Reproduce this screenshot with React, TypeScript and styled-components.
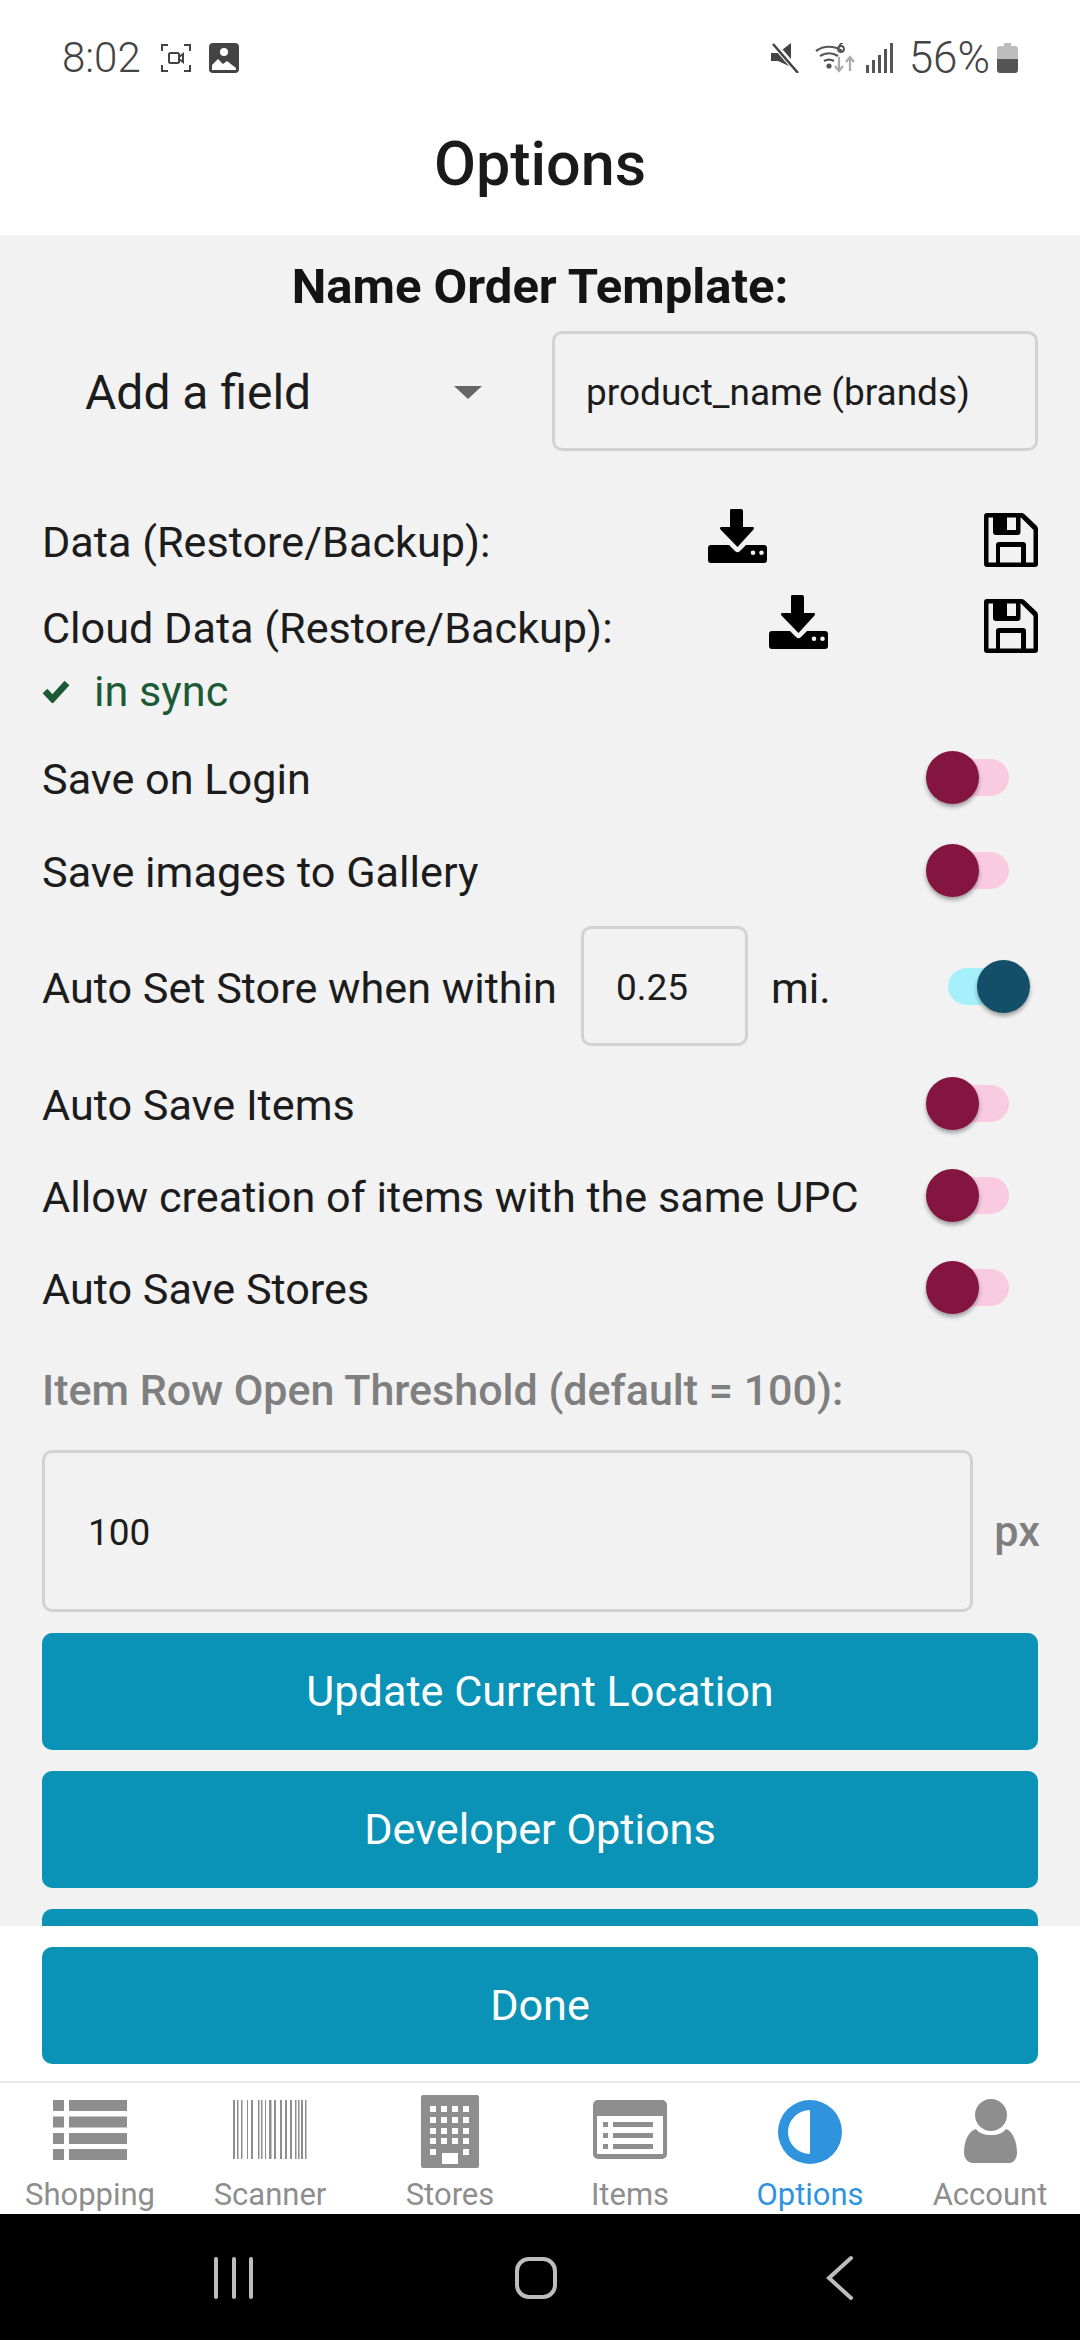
import React from "react";
import styled, { createGlobalStyle } from "styled-components";

const Global = createGlobalStyle`
  html, body { margin: 0; padding: 0; background: #fff; }
  #root { width: 1080px; height: 2340px; }
  * { box-sizing: border-box; }
`;

const Page = styled.div`
  width: 1080px; height: 2340px; display: flex; flex-direction: column;
  font-family: Roboto, "Liberation Sans", sans-serif; color: #1c1c1c; background: #fff; overflow: hidden;
`;
const StatusBar = styled.div`
  height: 116px; flex: none; padding: 43px 62px 0 62px; display: flex; align-items: flex-start; justify-content: space-between; color: #444;
`;
const StatusGroup = styled.div`
  display: flex; align-items: center; height: 30px;
`;
const StatusText = styled.span<{ $gap?: number; $fs: number }>`
  font-size: ${p => p.$fs}px; line-height: 30px; font-weight: 300; margin-right: ${p => p.$gap ?? 0}px;
`;
const StatusIcon = styled.svg<{ $gap?: number }>`
  display: block; flex: none; margin-right: ${p => p.$gap ?? 0}px;
`;
const Header = styled.div`
  height: 119px; flex: none; display: flex; justify-content: center; align-items: flex-start;
  font-size: 61px; font-weight: 500; line-height: 66px; padding-top: 15px; color: #1a1a1a;
`;
const Content = styled.div`
  flex: 1; min-height: 0; overflow: hidden; background: #f2f2f2; padding: 28px 42px 0;
`;
const Title = styled.div`
  text-align: center; font-size: 49px; font-weight: 700; line-height: 48px; color: #141414;
`;
const TemplateRow = styled.div`
  display: flex; align-items: center; justify-content: space-between; margin-top: 20px; height: 120px;
`;
const Picker = styled.div`
  width: 440px; padding: 3px 0 0 43px; display: flex; align-items: center; justify-content: space-between; font-size: 48px;
`;
const Caret = styled.span`
  width: 0; height: 0; border-left: 14px solid transparent; border-right: 14px solid transparent; border-top: 13px solid #666;
`;
const Field = styled.div<{ $h: number; $px: number; $fs: number }>`
  height: ${p => p.$h}px; border: 3px solid #d2d2d2; border-radius: 10px; display: flex; align-items: center;
  padding: 3px ${p => p.$px}px 0; font-size: ${p => p.$fs}px; color: #1c1c1c;
`;
const TemplateField = styled(Field)`
  width: 486px; flex: none;
`;
const DistanceField = styled(Field)`
  width: 167px; flex: none; margin-left: 24px;
`;
const ThresholdField = styled(Field)`
  flex: 1;
`;
const Label = styled.span`
  padding-top: 5px;
`;
const DataRow = styled.div<{ $mt: number }>`
  display: flex; align-items: center; justify-content: space-between; margin-top: ${p => p.$mt}px; height: 56px; font-size: 43.200px;
`;
const Sync = styled.div`
  display: flex; align-items: center; gap: 24px; color: #1c5a36; font-size: 43.200px; height: 56px; margin-top: 9px;
`;
const ToggleRow = styled.div<{ $mt: number }>`
  display: flex; align-items: center; justify-content: space-between; margin-top: ${p => p.$mt}px; height: 60px; font-size: 43.200px; padding-right: 29px;
`;
const Track = styled.div<{ $on?: boolean }>`
  position: relative; width: 78px; height: 37px; border-radius: 19px; background: ${p => (p.$on ? "#a5f0fb" : "#f8cbe0")};
`;
const Knob = styled.div<{ $on?: boolean }>`
  position: absolute; top: -8px; ${p => (p.$on ? "right: -4px;" : "left: -5px;")} width: 53px; height: 53px; border-radius: 50%;
  background: ${p => (p.$on ? "#134f68" : "#831540")}; box-shadow: 0 3px 4px rgba(0,0,0,.35);
`;
const AutoRow = styled.div`
  display: flex; align-items: center; margin-top: 26px; height: 120px; font-size: 43.200px; padding-right: 12px;
`;
const Unit = styled.span`
  margin-left: 23px; flex: 1; padding-top: 5px;
`;
const Threshold = styled.div`
  margin-top: 50px; font-size: 43px; font-weight: 500; color: #7f7f7f; line-height: 46px;
`;
const ThresholdRow = styled.div`
  display: flex; align-items: center; margin-top: 37px;
`;
const Px = styled.span`
  margin: 0 -2px 0 21px; font-size: 43.200px; font-weight: 500; color: #7f7f7f;
`;
const Button = styled.div`
  height: 117px; flex: none; border-radius: 10px; background: #0a93b7; color: #fff; font-size: 43.200px;
  display: flex; align-items: center; justify-content: center;
`;
const Stack = styled.div`
  display: flex; flex-direction: column; gap: 21px; margin-top: 21px;
`;
const Footer = styled.div`
  height: 157px; flex: none; background: #fff; padding: 21px 42px 0; border-bottom: 2px solid #e8e8e8;
`;
const Tabs = styled.div`
  height: 131px; flex: none; display: grid; grid-template-columns: repeat(6, 180px); background: #fff; padding-top: 12px;
`;
const Tab = styled.div<{ $active?: boolean }>`
  display: flex; flex-direction: column; align-items: center; color: ${p => (p.$active ? "#2f94dd" : "#8e8e8e")};
  font-size: 31px; line-height: 36px;
`;
const TabIcon = styled.svg`
  display: block; width: 80px; height: 73px; fill: currentColor; margin-bottom: 9px;
`;
const NavBar = styled.div`
  height: 126px; flex: none; background: #000;
`;
const NavSvg = styled.svg`
  display: block; width: 1080px; height: 126px;
`;
const IconSvg = styled.svg`
  display: block; flex: none;
`;
const DownloadSvg = styled(IconSvg)`
  margin-bottom: 8px;
`;

const Download = () => (
  <DownloadSvg width="59" height="54" viewBox="0 0 59 54">
    <path fill="#000" d="M22 1a2 2 0 0 1 2-1h9a2 2 0 0 1 2 2v16h9.500c1.500 0 2 1.500 1 2.500L29.500 38 12.500 20.500c-1-1-.5-2.500 1-2.500H22z" />
    <path fill="#000" fillRule="evenodd" d="M3 36h18l6 6a3.500 3.500 0 0 0 5 0l6-6h18a3 3 0 0 1 3 3v12a3 3 0 0 1-3 3H3a3 3 0 0 1-3-3V39a3 3 0 0 1 3-3zm42 10a2.300 2.300 0 1 0 0-4.600 2.300 2.300 0 0 0 0 4.600zm8.500 0a2.300 2.300 0 1 0 0-4.600 2.300 2.300 0 0 0 0 4.600z" />
  </DownloadSvg>
);
const Save = () => (
  <IconSvg width="54" height="54" viewBox="0 0 54 54">
    <path fill="#000" fillRule="evenodd" d="M3 0h35l2 .8L53 13l1 2.500V51a3 3 0 0 1-3 3H3a3 3 0 0 1-3-3V3a3 3 0 0 1 3-3zm1.500 4.500v45H12V32a3 3 0 0 1 3-3h24a3 3 0 0 1 3 3v17.500h7.500V17L37 4.500h-.5V19a3 3 0 0 1-3 3H12a3 3 0 0 1-3-3V4.500zM16 34v15.500h21V34zM23 4.500V17h9V4.500z" />
  </IconSvg>
);
const Check = () => (
  <IconSvg width="28" height="24" viewBox="0 0 28 24">
    <path fill="none" stroke="#1c5a36" strokeWidth="6.500" d="M3 12l7.500 8L25 4" />
  </IconSvg>
);

const Toggle = ({ on }: { on?: boolean }) => (
  <Track $on={on}><Knob $on={on} /></Track>
);

const Tog = ({ label, mt }: { label: string; mt: number }) => (
  <ToggleRow $mt={mt}><Label>{label}</Label><Toggle /></ToggleRow>
);

const barcode: [number, number][] = [[233,2],[237,1.500],[241,1.500],[247,1],[251,2],[258,1.500],[261,1.500],[265,1],[269,2.500],[274,2],[280,2],[285,2],[290,2],[295,1.500],[298,1.500],[301,2],[305,1.500]];

const App = () => (
  <Page>
    <Global />
    <StatusBar>
      <StatusGroup>
        <StatusText $fs={42} $gap={20}>8:02</StatusText>
        <StatusIcon $gap={18} width="30" height="30" viewBox="0 0 30 30" fill="none" stroke="#444" strokeWidth="2">
          <path d="M1 8V2h6M23 2h6v6M29 22v6h-6M7 28H1v-6" />
          <rect x="8" y="10" width="10" height="10" rx="1.500" />
          <path d="M18 14l4-3v8l-4-3" />
        </StatusIcon>
        <StatusIcon width="30" height="30" viewBox="0 0 30 30">
          <rect width="30" height="30" rx="4" fill="#444" />
          <circle cx="15" cy="9" r="4" fill="#fff" />
          <path fill="#fff" d="M3 27v-5l6-6 5 5 4-3 9 7v2z" />
        </StatusIcon>
      </StatusGroup>
      <StatusGroup>
        <StatusIcon $gap={15} width="29" height="30" viewBox="0 0 29 30" fill="#444">
          <path d="M0 10h7L20 0v24L7 18H0z" />
          <path d="M2 0l26 30" stroke="#fff" strokeWidth="6" />
          <path d="M2 1l25 29" stroke="#444" strokeWidth="2.500" />
        </StatusIcon>
        <StatusIcon $gap={11} width="40" height="30" viewBox="0 0 40 30" fill="none" stroke="#555" strokeWidth="2.200">
          <path d="M1 8a22 22 0 0 1 26 0M5 13a16 16 0 0 1 18 0M9 18a10 10 0 0 1 10 0" />
          <circle cx="14" cy="23" r="1.500" fill="#555" />
          <path d="M26 3a3 3 0 1 0 0 6 3 3 0 0 0 0-6zM28 0c-2 0-4 2-4 5" strokeWidth="1.800" />
          <path d="M24 14v14M20 23l4 5 4-5" stroke="#aaa" />
          <path d="M35 28V15M31 19l4-5 4 5" stroke="#aaa" />
        </StatusIcon>
        <StatusIcon $gap={16} width="27" height="30" viewBox="0 0 27 30" fill="#555">
          <rect x="0" y="22" width="3" height="8" />
          <rect x="6" y="17" width="3" height="13" />
          <rect x="12" y="12" width="3" height="18" />
          <rect x="18" y="6" width="3" height="24" />
          <rect x="24" y="0" width="3" height="30" />
        </StatusIcon>
        <StatusText $fs={44} $gap={7}>56%</StatusText>
        <StatusIcon width="21" height="30" viewBox="0 0 21 30">
          <path fill="#bdbdbd" d="M7 0h7v3h4a3 3 0 0 1 3 3v10H0V6a3 3 0 0 1 3-3h4z" />
          <path fill="#555" d="M0 16h21v11a3 3 0 0 1-3 3H3a3 3 0 0 1-3-3z" />
        </StatusIcon>
      </StatusGroup>
    </StatusBar>
    <Header>Options</Header>
    <Content>
      <Title>Name Order Template:</Title>
      <TemplateRow>
        <Picker>Add a field<Caret /></Picker>
        <TemplateField $h={120} $px={31} $fs={37}>product_name (brands)</TemplateField>
      </TemplateRow>
      <DataRow $mt={61}><Label>Data (Restore/Backup):</Label><Download /><Save /></DataRow>
      <DataRow $mt={30}><Label>Cloud Data (Restore/Backup):</Label><Download /><Save /></DataRow>
      <Sync><Check />in sync</Sync>
      <Tog label="Save on Login" mt={28} />
      <Tog label="Save images to Gallery" mt={33} />
      <AutoRow>
        <Label>Auto Set Store when within</Label>
        <DistanceField $h={120} $px={32} $fs={37}>0.25</DistanceField>
        <Unit>mi.</Unit>
        <Toggle on />
      </AutoRow>
      <Tog label="Auto Save Items" mt={27} />
      <Tog label="Allow creation of items with the same UPC" mt={32} />
      <Tog label="Auto Save Stores" mt={32} />
      <Threshold>Item Row Open Threshold (default = 100):</Threshold>
      <ThresholdRow>
        <ThresholdField $h={162} $px={43} $fs={37}>100</ThresholdField>
        <Px>px</Px>
      </ThresholdRow>
      <Stack>
        <Button>Update Current Location</Button>
        <Button>Developer Options</Button>
        <Button>&nbsp;</Button>
      </Stack>
    </Content>
    <Footer><Button>Done</Button></Footer>
    <Tabs>
      <Tab>
        <TabIcon viewBox="0 0 80 73">
          <path d="M3 5h11v11H3zM19 5h58v11H19zM3 21.500h11v11H3zM19 21.500h58v11H19zM3 38h11v11H3zM19 38h58v11H19zM3 54h11v11H3zM19 54h58v11H19z" />
        </TabIcon>
        Shopping
      </Tab>
      <Tab>
        <TabIcon viewBox="0 0 80 73">
          {barcode.map(([x, w]) => <rect key={x} x={x - 230} y="5" width={w} height="59" />)}
        </TabIcon>
        Scanner
      </Tab>
      <Tab>
        <TabIcon viewBox="0 0 80 73">
          <path fillRule="evenodd" d="M13 0h54a2 2 0 0 1 2 2v69a2 2 0 0 1-2 2H13a2 2 0 0 1-2-2V2a2 2 0 0 1 2-2zm7 11v6h6v-6zm11 0v6h6v-6zm11 0v6h6v-6zm11 0v6h6v-6zM20 22v6h6v-6zm11 0v6h6v-6zm11 0v6h6v-6zm11 0v6h6v-6zM20 33v6h6v-6zm11 0v6h6v-6zm11 0v6h6v-6zm11 0v6h6v-6zM20 43v6h6v-6zm11 0v6h6v-6zm11 0v6h6v-6zm11 0v6h6v-6zM20 54v6h6v-6zm33 0v6h6v-6zM32 58v11h16V58z" />
        </TabIcon>
        Stores
      </Tab>
      <Tab>
        <TabIcon viewBox="0 0 80 73">
          <path fillRule="evenodd" d="M8 5h64a5 5 0 0 1 5 5v49a5 5 0 0 1-5 5H8a5 5 0 0 1-5-5V10a5 5 0 0 1 5-5zm-1 16v38h66V21zm6 6h5v5h-5zm10 0h40v5H23zm-10 11h5v5h-5zm10 0h40v5H23zm-10 11h5v5h-5zm10 0h40v5H23z" />
        </TabIcon>
        Items
      </Tab>
      <Tab $active>
        <TabIcon viewBox="0 0 80 73">
          <path fillRule="evenodd" d="M40 5a32 32 0 1 1 0 64 32 32 0 0 1 0-64zm0 10a22 22 0 0 0 0 44z" />
        </TabIcon>
        Options
      </Tab>
      <Tab>
        <TabIcon viewBox="0 0 80 73">
          <circle cx="41" cy="20" r="16" />
          <path d="M26 34c3 4 8 6 15 6s12-2 15-6c6 2 11 11 11 24 0 5-3 10-8 10H23c-5 0-9-5-9-10 0-13 5-22 12-24z" />
        </TabIcon>
        Account
      </Tab>
    </Tabs>
    <NavBar>
      <NavSvg viewBox="0 0 1080 126" fill="none" stroke="#bdbdbd" strokeWidth="4" strokeLinecap="round">
        <path d="M216 45v38M234 45v38M251 45v38" />
        <rect x="517" y="45" width="38" height="38" rx="12" />
        <path d="M851 44L829 64l22 20" />
      </NavSvg>
    </NavBar>
  </Page>
);

export default App;
